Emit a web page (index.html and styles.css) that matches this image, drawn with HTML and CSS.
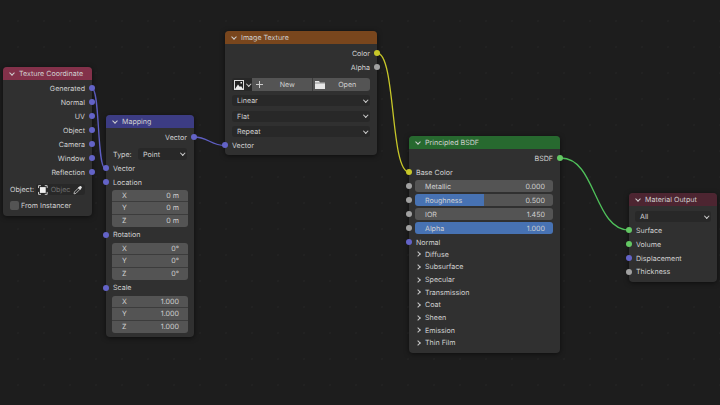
FILE: index.html
```html
<!DOCTYPE html>
<html lang="en">
    <head>
        <meta charset="UTF-8" />
        <meta name="viewport" content="width=device-width, initial-scale=1.0" />
        <title>Shader Editor</title>
        <link rel="stylesheet" href="styles.css">
    </head>
    <body>
        <div class="canvas">
            <!-- Wires sit under the nodes -->
            <svg class="wires" width="720" height="405" viewBox="0 0 720 405" fill="none">
                <path d="M92 88.5C100 88.5 97 168 105 168" stroke="#5f5fc4" stroke-width="1.3" />
                <path d="M194 137C208 137 211 145.500 225 145.500" stroke="#5f5fc4" stroke-width="1.3" />
                <path d="M377 53C396 53 390 172 409 172" stroke="#c7c729" stroke-width="1.3" />
                <path d="M561 158C596 158 594 230 629 230" stroke="#4fc05a" stroke-width="1.3" />
            </svg>

            <!-- Texture Coordinate -->
            <div class="node node-coord">
                <div class="head head-coord"><span class="arrow"></span>Texture Coordinate</div>
                <div class="body body-coord">
                    <div class="row out">Generated<i class="dot blue"></i></div>
                    <div class="row out">Normal<i class="dot blue"></i></div>
                    <div class="row out">UV<i class="dot blue"></i></div>
                    <div class="row out">Object<i class="dot blue"></i></div>
                    <div class="row out">Camera<i class="dot blue"></i></div>
                    <div class="row out">Window<i class="dot blue"></i></div>
                    <div class="row out">Reflection<i class="dot blue"></i></div>
                    <div class="object-row">
                        <span>Object:</span>
                        <div class="picker">
                            <svg width="10" height="10" viewBox="0 0 10 10">
                                <path d="M0.500 3V0.500H3M7 0.500H9.500V3M9.500 7V9.500H7M3 9.500H0.500V7" fill="none" stroke="#ccc" stroke-width="1" />
                                <rect x="2" y="2" width="6" height="6" fill="#f0f0f0" />
                            </svg>
                            <span class="faded">Objec</span>
                            <svg class="dropper" width="10" height="10" viewBox="0 0 10 10">
                                <path d="M1 9L1.500 7L5.500 3L7 4.500L3 8.500Z" fill="none" stroke="#c4c4c4" stroke-width="0.900" />
                                <path d="M5 2.500L7.500 0.800C8.200 0.400 9.600 1.800 9.200 2.500L7.500 5Z" fill="#e4e4e4" />
                            </svg>
                        </div>
                    </div>
                    <div class="check-row"><span class="check"></span>From Instancer</div>
                </div>
            </div>

            <!-- Mapping -->
            <div class="node node-mapping">
                <div class="head head-mapping"><span class="arrow"></span>Mapping</div>
                <div class="body body-mapping">
                    <div class="row out">Vector<i class="dot blue"></i></div>
                    <div class="type-row">
                        <span>Type:</span>
                        <div class="select select-type">Point<span class="arrow arrow-end"></span></div>
                    </div>
                    <div class="row in"><i class="dot blue"></i>Vector</div>
                    <div class="row in"><i class="dot blue"></i>Location</div>
                    <div class="fields">
                        <div class="field"><span>X</span><span>0 m</span></div>
                        <div class="field"><span>Y</span><span>0 m</span></div>
                        <div class="field"><span>Z</span><span>0 m</span></div>
                    </div>
                    <div class="row in"><i class="dot blue"></i>Rotation</div>
                    <div class="fields">
                        <div class="field"><span>X</span><span>0°</span></div>
                        <div class="field"><span>Y</span><span>0°</span></div>
                        <div class="field"><span>Z</span><span>0°</span></div>
                    </div>
                    <div class="row in"><i class="dot blue"></i>Scale</div>
                    <div class="fields">
                        <div class="field"><span>X</span><span>1.000</span></div>
                        <div class="field"><span>Y</span><span>1.000</span></div>
                        <div class="field"><span>Z</span><span>1.000</span></div>
                    </div>
                </div>
            </div>

            <!-- Image Texture -->
            <div class="node node-image">
                <div class="head head-image"><span class="arrow"></span>Image Texture</div>
                <div class="body body-image">
                    <div class="row out">Color<i class="dot yellow"></i></div>
                    <div class="row out">Alpha<i class="dot grey"></i></div>
                    <div class="buttons">
                        <div class="btn-browse">
                            <svg width="10" height="10" viewBox="0 0 10 10">
                                <rect x="0.500" y="0.500" width="9" height="9" fill="#222" stroke="#ddd" />
                                <path d="M1 9L4 4.500L6 7L7 6L9 9Z" fill="#eee" />
                                <rect x="6.500" y="2" width="1.500" height="1.500" fill="#eee" />
                            </svg>
                            <span class="arrow"></span>
                        </div>
                        <div class="btn btn-new">
                            <svg width="7" height="7" viewBox="0 0 7 7"><path d="M3.500 0V7M0 3.500H7" stroke="#ccc" stroke-width="1" /></svg>
                            <span class="btn-label">New</span>
                        </div>
                        <div class="btn btn-open">
                            <svg width="10" height="8" viewBox="0 0 10 8"><path d="M0 0H4L5 1.500H10V8H0Z" fill="#e6e6e6" /><path d="M0 2H10" stroke="#555" stroke-width="0.600" /></svg>
                            <span class="btn-label">Open</span>
                        </div>
                    </div>
                    <div class="select-stack">
                        <div class="select">Linear<span class="arrow arrow-end"></span></div>
                        <div class="select">Flat<span class="arrow arrow-end"></span></div>
                        <div class="select">Repeat<span class="arrow arrow-end"></span></div>
                    </div>
                    <div class="row in"><i class="dot blue"></i>Vector</div>
                </div>
            </div>

            <!-- Principled BSDF -->
            <div class="node node-bsdf">
                <div class="head head-bsdf"><span class="arrow"></span>Principled BSDF</div>
                <div class="body body-bsdf">
                    <div class="row out">BSDF<i class="dot green"></i></div>
                    <div class="row in"><i class="dot yellow"></i>Base Color</div>
                    <div class="slider-row"><i class="dot grey"></i>
                        <div class="slider"><span>Metallic</span><span>0.000</span></div>
                    </div>
                    <div class="slider-row"><i class="dot grey"></i>
                        <div class="slider half"><span>Roughness</span><span>0.500</span></div>
                    </div>
                    <div class="slider-row"><i class="dot grey"></i>
                        <div class="slider"><span>IOR</span><span>1.450</span></div>
                    </div>
                    <div class="slider-row"><i class="dot grey"></i>
                        <div class="slider full"><span>Alpha</span><span>1.000</span></div>
                    </div>
                    <div class="row in"><i class="dot blue"></i>Normal</div>
                    <div class="panels">
                        <div class="panel"><span class="caret"></span>Diffuse</div>
                        <div class="panel"><span class="caret"></span>Subsurface</div>
                        <div class="panel"><span class="caret"></span>Specular</div>
                        <div class="panel"><span class="caret"></span>Transmission</div>
                        <div class="panel"><span class="caret"></span>Coat</div>
                        <div class="panel"><span class="caret"></span>Sheen</div>
                        <div class="panel"><span class="caret"></span>Emission</div>
                        <div class="panel"><span class="caret"></span>Thin Film</div>
                    </div>
                </div>
            </div>

            <!-- Material Output -->
            <div class="node node-output">
                <div class="head head-output"><span class="arrow"></span>Material Output</div>
                <div class="body body-output">
                    <div class="select select-all">All<span class="arrow arrow-end"></span></div>
                    <div class="row in"><i class="dot green"></i>Surface</div>
                    <div class="row in"><i class="dot green"></i>Volume</div>
                    <div class="row in"><i class="dot blue"></i>Displacement</div>
                    <div class="row in"><i class="dot grey"></i>Thickness</div>
                </div>
            </div>
        </div>
    </body>
</html>
```

FILE: styles.css
```css
* {
    box-sizing: border-box;
}
html, body {
    margin: 0;
    padding: 0;
}
body {
    font-family: "Inter", "Liberation Sans", sans-serif;
    font-size: 7.100px;
    color: #d0d0d0;
    background: #1d1d1d;
    text-rendering: geometricPrecision;
}
.canvas {
    position: relative;
    width: 720px;
    height: 405px;
    overflow: hidden;
    background-color: #1d1d1d;
    background-image: radial-gradient(circle, #222222 0.7px, transparent 0.8px);
    background-size: 26px 26px;
    background-position: 5px 8px;
}
.wires {
    position: absolute;
    left: 0;
    top: 0;
}

/* nodes live on a free canvas */
.node {
    position: absolute;
    background: #303030;
    border-radius: 4px;
    box-shadow: 0 1px 5px rgba(0, 0, 0, 0.55);
}
.node-coord { left: 3px; top: 67px; width: 89px; height: 149px; }
.node-mapping { left: 106px; top: 115px; width: 88px; height: 222px; }
.node-image { left: 225px; top: 31px; width: 152px; height: 124px; }
.node-bsdf { left: 409px; top: 136px; width: 151px; height: 217px; }
.node-output { left: 629px; top: 193px; width: 88px; height: 89px; }

.head {
    display: flex;
    align-items: center;
    height: 13px;
    padding-left: 7px;
    border-radius: 4px 4px 0 0;
    white-space: nowrap;
}
.head-coord { background: #83314a; }
.head-mapping { background: #3c3c83; }
.head-image { background: #79461d; }
.head-bsdf { background: #27692f; }
.head-output { background: #4d2531; }

/* little down chevron, used in headers and dropdowns */
.arrow {
    flex: none;
    width: 4px;
    height: 4px;
    margin: -2px 5px 0 0;
    border-right: 1px solid #d0d0d0;
    border-bottom: 1px solid #d0d0d0;
    transform: rotate(45deg);
}
.select .arrow-end {
    width: 3.500px;
    height: 3.500px;
    margin: -2px 3px 0 auto;
}

.row {
    position: relative;
    display: flex;
    align-items: center;
    height: 14px;
    white-space: nowrap;
}
.out {
    justify-content: flex-end;
    padding-right: 7px;
}
.in {
    padding-left: 7px;
}
.dot {
    position: absolute;
    width: 6px;
    height: 6px;
    border-radius: 50%;
    top: 50%;
    margin-top: -3px;
}
.out .dot { right: -3px; }
.in .dot { left: -3px; }
.blue { background: #6363c7; }
.yellow { background: #c7c729; }
.grey { background: #a1a1a1; }
.green { background: #63c763; }

/* Texture Coordinate */
.body-coord { padding-top: 1px; }
.object-row {
    display: flex;
    align-items: center;
    justify-content: space-between;
    height: 11px;
    margin-top: 5px;
    padding: 0 7px;
}
.picker {
    display: flex;
    align-items: center;
    gap: 3px;
    width: 49px;
    height: 11px;
    padding: 0 2px;
    background: #282828;
    border-radius: 3px;
}
.faded {
    color: #6e6e6e;
}
.dropper {
    margin-left: auto;
}
.check-row {
    display: flex;
    align-items: center;
    gap: 2px;
    height: 9px;
    margin-top: 6px;
    padding-left: 7px;
}
.check {
    width: 9px;
    height: 9px;
    background: #545454;
    border-radius: 2px;
}

/* Mapping */
.body-mapping { padding-top: 2px; }
.type-row {
    display: flex;
    align-items: center;
    justify-content: space-between;
    height: 12px;
    margin: 4px 0 1px;
    padding: 0 7px;
}
.select {
    display: flex;
    align-items: center;
    height: 11px;
    padding-left: 5px;
    background: #282828;
    border-radius: 3px;
}
.type-row .select {
    height: 12px;
}
.select-type {
    width: 49px;
}
.fields {
    margin: 1px 6px;
    border-radius: 3px;
    overflow: hidden;
}
.field {
    display: flex;
    justify-content: space-between;
    align-items: center;
    height: 12.330px;
    padding: 0 9px 0 10px;
    background: #545454;
    border-bottom: 1px solid #3c3c3c;
}
.field:last-child {
    border-bottom: 0;
}

/* Image Texture */
.body-image { padding-top: 2px; }
.buttons {
    display: flex;
    height: 13px;
    margin: 4px 7px;
}
.btn-browse {
    display: flex;
    align-items: center;
    justify-content: center;
    gap: 3px;
    width: 20px;
    background: #282828;
    border-radius: 3px 0 0 3px;
}
.btn-browse .arrow {
    width: 3.500px;
    height: 3.500px;
    margin: -2px 0 0;
}
.btn {
    display: flex;
    align-items: center;
    flex: 1;
    background: #545454;
}
.btn-new {
    border-right: 1px solid #3c3c3c;
    padding-left: 4px;
}
.btn-open {
    padding-left: 2px;
    border-radius: 0 3px 3px 0;
}
.btn-label {
    flex: 1;
    text-align: center;
}
.select-stack {
    display: flex;
    flex-direction: column;
    gap: 4.500px;
    margin: 0 7px 1px;
}

/* Principled BSDF */
.body-bsdf { padding-top: 2px; }
.slider-row {
    position: relative;
    display: flex;
    align-items: center;
    height: 14px;
    padding: 0 7px 0 6px;
}
.slider-row .dot {
    left: -3px;
}
.slider {
    display: flex;
    justify-content: space-between;
    align-items: center;
    width: 138px;
    height: 12px;
    padding: 0 8px 0 10px;
    background: #545454;
    border-radius: 3px;
}
.half {
    background: linear-gradient(to right, #4772b3 50%, #545454 50%);
}
.full {
    background: #4772b3;
}
.panels {
    margin-top: -1px;
}
.panel {
    display: flex;
    align-items: center;
    height: 12.650px;
    padding-left: 7px;
}
.caret {
    flex: none;
    width: 4px;
    height: 4px;
    margin-right: 5px;
    border-right: 1px solid #c8c8c8;
    border-top: 1px solid #c8c8c8;
    transform: rotate(45deg);
}

/* Material Output */
.body-output { padding-top: 5px; }
.select-all {
    margin: 0 6px 1.300px;
}
.body-output .row {
    height: 13.900px;
}
```
